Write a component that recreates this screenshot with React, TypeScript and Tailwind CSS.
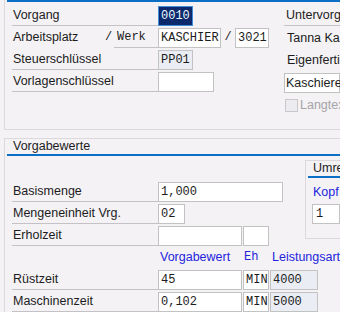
const sans = "font-['Liberation_Sans',Arial,sans-serif]";
const mono = "font-['Liberation_Mono','Courier_New',monospace]";

function Lbl({ children, line = true }: { children: React.ReactNode; line?: boolean }) {
  return (
    <div
      className={`mt-px h-[20px] w-[146px] shrink-0 pl-px leading-[19px] whitespace-nowrap ${line ? 'border-b border-[#c4c2c6]' : ''}`}
    >
      {children}
    </div>
  );
}

function Field({
  children,
  w,
  ro = false,
}: {
  children?: React.ReactNode;
  w: string;
  ro?: boolean;
}) {
  return (
    <div
      className={`mt-px h-[20px] shrink-0 border border-[#c2c2c2] pl-[2px] text-[12px] leading-[18px] whitespace-nowrap ${mono} ${w} ${ro ? 'bg-[#eaedf4]' : 'bg-white'}`}
    >
      {children}
    </div>
  );
}

export default function App() {
  return (
    <div className={`h-[312px] w-[340px] overflow-hidden bg-[#f4f2f5] text-[12.5px] text-[#1c1c1c] ${sans}`}>
      {/* Vorgang frame */}
      <div className="ml-[4px] h-[130px] border-b border-l border-[#dcd9dd]">
        <div className="ml-[2px] h-[2px] bg-[#0b6fc6]" />
        <div className="mt-[3px] flex">
          <div className="ml-[7px] w-[272px] shrink-0">
            <div className="flex h-[22px]">
              <Lbl>Vorgang</Lbl>
              <div className={`mt-px h-[20px] w-[35px] border border-[#3f8fdd] bg-[#0c2a6b] pl-[2px] text-[12px] leading-[18px] text-[#eaf6ff] ${mono}`}>
                0010
              </div>
            </div>
            <div className="flex h-[22px]">
              <div className="mt-px h-[20px] w-[93px] shrink-0 pl-px leading-[19px]">Arbeitsplatz</div>
              <div className={`mt-px w-[9px] shrink-0 text-[12px] leading-[19px] ${mono}`}>/</div>
              <div className={`mt-px h-[20px] w-[44px] shrink-0 border-b border-[#c4c2c6] pl-[3px] text-[12px] leading-[19px] ${mono}`}>
                Werk
              </div>
              <Field w="w-[63px]">KASCHIER</Field>
              <div className={`mt-px w-[14px] shrink-0 text-center text-[12px] leading-[19px] ${mono}`}>/</div>
              <Field w="w-[34px]">3021</Field>
            </div>
            <div className="flex h-[22px]">
              <Lbl>Steuerschlüssel</Lbl>
              <Field w="w-[35px]" ro>
                PP01
              </Field>
            </div>
            <div className="flex h-[22px]">
              <Lbl>Vorlagenschlüssel</Lbl>
              <Field w="w-[56px]" />
            </div>
          </div>
          <div className="min-w-0 flex-1 whitespace-nowrap">
            <div className="h-[22px]">
              <div className="mt-px h-[20px] border-b border-[#c4c2c6] pl-[2px] leading-[19px]">Untervorgang</div>
            </div>
            <div className="h-[22px] pl-[3px] pt-px leading-[19px]">Tanna Kaschieranlage</div>
            <div className="h-[22px] pl-[3px] pt-px leading-[19px]">Eigenfertigung</div>
            <div className="h-[22px]">
              <div className="mt-px h-[20px] border border-[#c2c2c2] bg-white pl-[1px] leading-[18px]">
                Kaschieren mit Folie
              </div>
            </div>
            <div className="mt-[4px] flex items-center pl-px">
              <div className="h-[13px] w-[13px] shrink-0 border border-[#cac8cc] bg-[#ecebef]" />
              <span className="ml-[2px] leading-[13px] text-[#a6a4a8]">Langtext</span>
            </div>
          </div>
        </div>
      </div>

      {/* Vorgabewerte frame */}
      <div className="ml-[4px] mt-[8px] h-[200px] border-l border-t border-[#dcd9dd]">
        <div className="h-[15px] pl-[8px] leading-[15px]">Vorgabewerte</div>
        <div className="ml-[2px] h-[2px] bg-[#0b6fc6]" />
        <div className="flex">
          <div className="ml-[7px] mt-[25px] w-[293px] shrink-0">
            <div className="flex h-[22px]">
              <Lbl>Basismenge</Lbl>
              <Field w="w-[125px]">1,000</Field>
            </div>
            <div className="flex h-[22px]">
              <Lbl>Mengeneinheit Vrg.</Lbl>
              <Field w="w-[27px]">02</Field>
            </div>
            <div className="flex h-[22px]">
              <Lbl>Erholzeit</Lbl>
              <Field w="w-[84px]" />
              <div className="w-px shrink-0" />
              <Field w="w-[26px]" />
            </div>
            <div className="flex h-[22px] text-[#2424dc]">
              <div className="w-[146px] shrink-0" />
              <div className="mt-px w-[85px] shrink-0 pl-[2px] leading-[19px]">Vorgabewert</div>
              <div className={`mt-px w-[28px] shrink-0 pl-px text-[12px] leading-[19px] ${mono}`}>Eh</div>
              <div className="mt-px pl-px leading-[19px] whitespace-nowrap">Leistungsart</div>
            </div>
            <div className="flex h-[22px]">
              <Lbl>Rüstzeit</Lbl>
              <Field w="w-[84px]">45</Field>
              <div className="w-px shrink-0" />
              <Field w="w-[26px]">MIN</Field>
              <div className="w-px shrink-0" />
              <Field w="w-[48px]" ro>
                4000
              </Field>
            </div>
            <div className="flex h-[22px]">
              <Lbl>Maschinenzeit</Lbl>
              <Field w="w-[84px]">0,102</Field>
              <div className="w-px shrink-0" />
              <Field w="w-[26px]">MIN</Field>
              <div className="w-px shrink-0" />
              <Field w="w-[48px]" ro>
                5000
              </Field>
            </div>
          </div>
          <div className="mt-[4px] h-[79px] min-w-0 flex-1 border-b border-l border-t border-[#dcd9dd] whitespace-nowrap">
            <div className="h-[15px] pl-[7px] leading-[15px]">Umrechnung</div>
            <div className="ml-[2px] h-[2px] bg-[#0b6fc6]" />
            <div className="mt-[4px] pl-[7px] leading-[20px] text-[#2424dc]">Kopf</div>
            <div className={`ml-[6px] mt-[2px] h-[20px] border border-[#c2c2c2] bg-white pl-[3px] text-[12px] leading-[18px] ${mono}`}>
              1
            </div>
          </div>
        </div>
      </div>
    </div>
  );
}
